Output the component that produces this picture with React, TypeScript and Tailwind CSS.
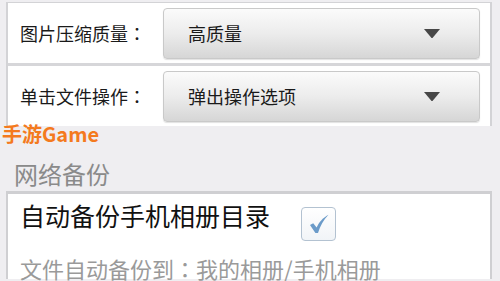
import React from 'react';

const cjk = "font-['Noto_Sans_CJK_SC','Noto_Sans',sans-serif]";

// 全角冒号居中显示（繁体字形）
function Colon() {
  return <span className="font-['Noto_Sans_CJK_TC',sans-serif]">：</span>;
}

function Spinner({ value }: { value: string }) {
  return (
    <div className="flex h-[51px] w-[317px] items-center justify-between rounded-[4px] border border-[#c9c9c9] bg-gradient-to-b from-[#fbfbfb] via-[#ececec] to-[#d6d6d6] pl-[24px] pr-[39px] shadow-[0_1px_1px_rgba(0,0,0,0.12)]">
      <span className="text-[18px] leading-none text-[#1a1a1a]">{value}</span>
      <svg width="16" height="9" viewBox="0 0 16 9">
        <path d="M0 0 H16 L8.5 9 H7.5 Z" fill="#474747" />
      </svg>
    </div>
  );
}

function SettingRow({ label, value }: { label: string; value: string }) {
  return (
    <div className="flex h-[60px] items-center pl-[12px]">
      <span className="w-[143px] text-[18px] leading-none text-[#1a1a1a]">
        {label}
        <Colon />
      </span>
      <Spinner value={value} />
    </div>
  );
}

export default function App() {
  return (
    <div className={`relative h-[281px] w-[500px] overflow-hidden bg-[#efeef1] ${cjk}`}>
      {/* spinner settings */}
      <div className="ml-[6px] mt-[2px] w-[486px] border-x-2 border-t border-[#d3d3d6] bg-white">
        <SettingRow label="图片压缩质量" value="高质量" />
        <div className="h-[3px] bg-[#d6d6d9]" />
        <SettingRow label="单击文件操作" value="弹出操作选项" />
      </div>

      {/* watermark */}
      <div className="absolute left-[2px] top-[122px] text-[20px] font-bold leading-[24px] text-[#f47a1e]">
        手游Game
      </div>

      {/* section header */}
      <div className="pl-[14px] pt-[34px] pb-[3px] text-[24px] leading-[28px] text-[#8a8a8a]">网络备份</div>

      {/* backup option */}
      <div className="ml-[6px] w-[486px] border-x-2 border-t-[3px] border-[#cfcfd2] bg-white pl-[12px]">
        <div className="flex items-start pt-[7px]">
          <span className="text-[25px] leading-[28px] text-[#111]">自动备份手机相册目录</span>
          <div className="ml-[31px] mt-[6px] flex h-[34px] w-[35px] items-center justify-center rounded-[4px] border border-[#b3c2d1] bg-gradient-to-b from-white to-[#f1f4f7]">
            <svg width="22" height="20" viewBox="0 0 22 20">
              <path d="M2 11 L5.2 9.2 L8.6 13.6 C11 8.5 14.5 4 20.5 0.8 C15.5 6 12 12 10 19 L7.4 19 Z" fill="#6b9bc9" />
            </svg>
          </div>
        </div>
        <div className="pt-[16px] text-[22px] leading-[22px] text-[#9a9a9a]">
          文件自动备份到<Colon />我的相册/手机相册
        </div>
      </div>
    </div>
  );
}
